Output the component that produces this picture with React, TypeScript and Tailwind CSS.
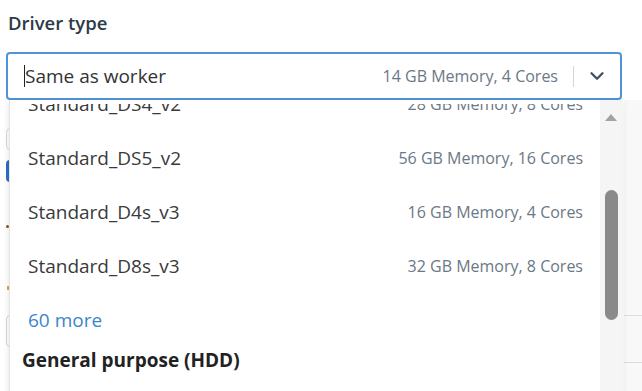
import { ChevronDown } from "lucide-react";

const rows = [
  { name: "Standard_DS4_v2", spec: "28 GB Memory, 8 Cores" },
  { name: "Standard_DS5_v2", spec: "56 GB Memory, 16 Cores" },
  { name: "Standard_D4s_v3", spec: "16 GB Memory, 4 Cores" },
  { name: "Standard_D8s_v3", spec: "32 GB Memory, 8 Cores" },
];

export default function App() {
  return (
    <div className="relative h-[391px] w-[642px] overflow-hidden bg-white font-['Open_Sans',sans-serif] text-[#333]">
      {/* page content peeking out behind the menu */}
      <div className="absolute left-[6px] top-[128px] h-[22px] w-[8px] rounded-l border border-[#d9d9d9]" />
      <div className="absolute left-[6px] top-[160px] h-[22px] w-[8px] rounded-l bg-[#2a6fc4]" />
      <div className="absolute left-[6px] top-[225px] h-[3px] w-[3px] rounded-full bg-[#7a5a2a]" />
      <div className="absolute left-[7px] top-[286px] h-[4px] w-[3px] bg-[#e0a060]" />
      <div className="absolute left-[6px] top-[315px] h-[32px] w-[8px] rounded-l border border-[#d9d9d9]" />
      <div className="absolute right-0 top-[100px] h-[291px] w-[18px] bg-[#f8f8f8]" />
      <div className="absolute right-0 top-[315px] h-px w-[18px] bg-[#dcdcdc]" />
      <div className="absolute right-0 top-[362px] h-px w-[18px] bg-[#dcdcdc]" />

      <div className="px-[8px] pt-[11px] text-[18.5px] font-semibold leading-[24px] text-[#2d3a48]">Driver type</div>

      <div className="relative mt-[17px] ml-[6px] w-[616px]">
        <div className="flex h-[48px] items-center rounded-[4px] border-2 border-[#4f93d8] bg-white pl-[16px] pr-[12px]">
          <span className="h-[22px] w-px bg-[#222]" />
          <span className="flex-1 text-[19px]">Same as worker</span>
          <span className="text-[16px] text-[#6b7886]">14 GB Memory, 4 Cores</span>
          <span className="ml-[15px] h-[21px] w-px bg-[#cfd6dd]" />
          <ChevronDown className="ml-[12px] size-[22px] text-[#3d4f63]" strokeWidth={2.5} />
        </div>

        {/* dropdown menu */}
        <div className="absolute left-[3px] top-[48px] flex h-[300px] w-[613px] border-l border-[#e4e4e4] bg-white shadow-[0_2px_6px_rgba(0,0,0,0.12)]">
          <div className="h-full flex-1 overflow-hidden pt-[4px]">
            <div className="h-full overflow-hidden">
              <div className="-mt-[27px]">
                {rows.map((r) => (
                  <div key={r.name} className="flex h-[54px] items-center justify-between pl-[18px] pr-[17px]">
                    <span className="text-[19px] text-[#3a3a3a]">{r.name}</span>
                    <span className="text-[16px] text-[#6b7886]">{r.spec}</span>
                  </div>
                ))}
                <div className="flex h-[54px] items-center pl-[18px] text-[19px] text-[#3b86c9]">60 more</div>
                <div className="flex h-[26px] items-center pl-[12px] text-[19px] font-bold text-[#222]">General purpose (HDD)</div>
              </div>
            </div>
          </div>
          <div className="flex w-[22px] flex-col items-center bg-[#f5f5f5]">
            <div className="mt-[14px] h-0 w-0 border-x-[6px] border-b-[7px] border-x-transparent border-b-[#a3a3a3]" />
            <div className="mt-[69px] h-[130px] w-[13px] rounded-full bg-[#8a8a8a]" />
          </div>
        </div>
      </div>
    </div>
  );
}
